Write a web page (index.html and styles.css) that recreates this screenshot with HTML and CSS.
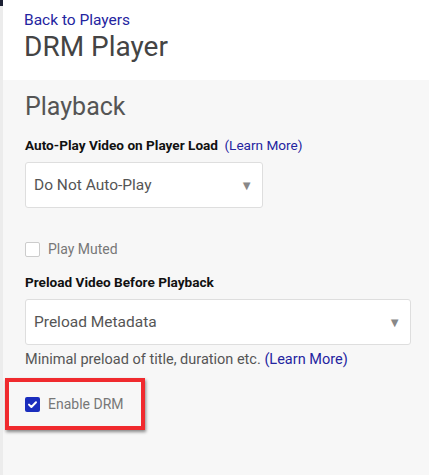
FILE: index.html
```html
<!DOCTYPE html>
<html>
<head>
<meta charset="utf-8">
<link rel="stylesheet" href="styles.css">
</head>
<body>
<div class="app">
  <div class="rail"></div>
  <div class="page">
    <header class="header">
      <a class="back" href="#">Back to Players</a>
      <h1 class="title">DRM Player</h1>
    </header>
    <main class="main">
      <h2 class="section">Playback</h2>
      <div class="field">
        <div class="label">Auto-Play Video on Player Load <a class="learn" href="#">(Learn More)</a></div>
        <div class="select select-short"><span>Do Not Auto-Play</span><span class="arrow">▼</span></div>
      </div>
      <label class="check">
        <span class="box"></span><span class="check-text">Play Muted</span>
      </label>
      <div class="field field-2">
        <div class="label">Preload Video Before Playback</div>
        <div class="select select-wide"><span>Preload Metadata</span><span class="arrow">▼</span></div>
        <div class="help">Minimal preload of title, duration etc. <a class="help-link" href="#">(Learn More)</a></div>
      </div>
      <div class="highlight">
        <label class="check check-drm">
          <span class="box box-on"><svg width="15" height="15" viewBox="0 0 15 15"><path d="M4 7.6l2.4 2.4 4.6-4.8" fill="none" stroke="#fff" stroke-width="2" stroke-linecap="round" stroke-linejoin="round"/></svg></span><span class="check-text">Enable DRM</span>
        </label>
      </div>
    </main>
  </div>
</div>
</body>
</html>
```
FILE: styles.css
```css
html, body { margin: 0; padding: 0; }
body {
  font-family: Roboto, "Liberation Sans", sans-serif;
  background: #f7f7f7;
  width: 429px;
  height: 475px;
  overflow: hidden;
}
.app {
  display: grid;
  grid-template-columns: 3px 1fr;
  height: 475px;
}
.rail {
  background: #ececec;
  border-top: 6px solid #1b2033;
}
.page { display: flex; flex-direction: column; }
.header {
  background: #fff;
  height: 80px;
  box-sizing: border-box;
  padding: 11px 0 0 21px;
}
.back {
  display: block;
  color: #2424a0;
  text-decoration: none;
  font-size: 15.5px;
  line-height: 18px;
}
.title {
  margin: 2px 0 0;
  font-weight: 400;
  font-size: 28px;
  line-height: 32px;
  color: #444;
}
.main {
  padding: 12px 0 0 22px;
  flex: 1;
}
.section {
  margin: 0;
  font-weight: 400;
  font-size: 25px;
  line-height: 30px;
  color: #555;
}
.field { margin-top: 15px; }
.label {
  font-weight: 700;
  font-size: 13.6px;
  line-height: 16px;
  color: #111;
}
.learn {
  font-weight: 400;
  color: #2424a0;
  text-decoration: none;
  margin-left: 3px;
}
.select {
  margin-top: 9px;
  height: 46px;
  box-sizing: border-box;
  background: #fff;
  border: 1px solid #dedede;
  border-radius: 3px;
  display: flex;
  align-items: center;
  justify-content: space-between;
  padding: 0 9px 0 8px;
  font-size: 15.5px;
  color: #555;
}
.select-short { width: 238px; }
.select-wide { width: 386px; }
.arrow { color: #888; font-size: 13px; }
.check {
  display: flex;
  align-items: center;
  gap: 8px;
  margin-top: 33px;
}
.box {
  width: 13px;
  height: 13px;
  border: 1px solid #ccc;
  border-radius: 2px;
  background: #fff;
  display: flex;
}
.box-on {
  width: 15px;
  height: 15px;
  border: 0;
  background: #1a2dbd;
}
.check-text {
  font-size: 14px;
  color: #777;
}
.field-2 { margin-top: 17px; }
.help {
  margin-top: 6px;
  font-size: 14.5px;
  line-height: 18px;
  color: #555;
}
.help-link { color: #2424a0; text-decoration: none; }
.highlight {
  margin: 9px 0 0 -20px;
  width: 140px;
  height: 52px;
  box-sizing: border-box;
  border: 4px solid #f02a2e;
  box-shadow: 1px 2px 3px rgba(0,0,0,0.45);
  display: flex;
  align-items: center;
  padding-left: 16px;
}
.check-drm { margin-top: 0; }
```
